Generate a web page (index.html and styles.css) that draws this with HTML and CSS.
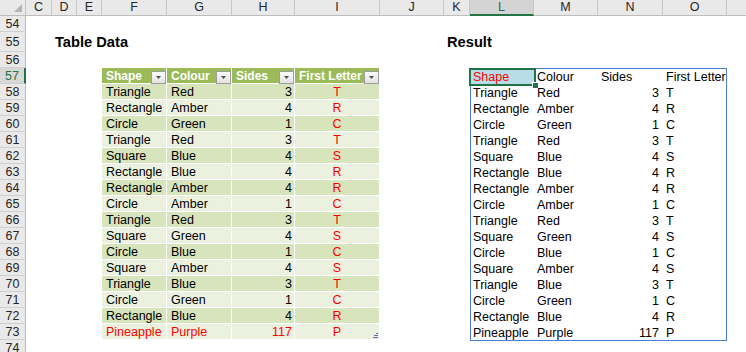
FILE: index.html
```html
<!DOCTYPE html>
<html>
<head>
<meta charset="utf-8">
<title>Sheet</title>
<link rel="stylesheet" href="styles.css">
</head>
<body>
<div class="sheet">
  <div class="corner"><span class="tri"></span></div>
  <div class="colhead">
    <div class="ch">C</div><div class="ch">D</div><div class="ch">E</div><div class="ch">F</div>
    <div class="ch">G</div><div class="ch">H</div><div class="ch">I</div><div class="ch">J</div>
    <div class="ch">K</div><div class="ch on">L</div><div class="ch">M</div><div class="ch">N</div>
    <div class="ch">O</div><div class="ch"></div>
  </div>
  <div class="rowhead">
    <div class="rh">54</div><div class="rh tall">55</div><div class="rh">56</div><div class="rh on">57</div>
    <div class="rh">58</div><div class="rh">59</div><div class="rh">60</div><div class="rh">61</div>
    <div class="rh">62</div><div class="rh">63</div><div class="rh">64</div><div class="rh">65</div>
    <div class="rh">66</div><div class="rh">67</div><div class="rh">68</div><div class="rh">69</div>
    <div class="rh">70</div><div class="rh">71</div><div class="rh">72</div><div class="rh">73</div>
    <div class="rh">74</div>
  </div>
  <div class="cells">
    <div class="title t1">Table Data</div>
    <div class="title t2">Result</div>

    <div class="tbl">
      <div class="tr th">
        <div class="hc"><span>Shape</span><i class="fb"><svg width="5" height="3" viewBox="0 0 5 3"><polygon points="0,0 5,0 2.5,3" fill="#505050"/></svg></i></div>
        <div class="hc"><span>Colour</span><i class="fb"><svg width="5" height="3" viewBox="0 0 5 3"><polygon points="0,0 5,0 2.5,3" fill="#505050"/></svg></i></div>
        <div class="hc"><span>Sides</span><i class="fb"><svg width="5" height="3" viewBox="0 0 5 3"><polygon points="0,0 5,0 2.5,3" fill="#505050"/></svg></i></div>
        <div class="hc"><span>First Letter</span><i class="fb"><svg width="5" height="3" viewBox="0 0 5 3"><polygon points="0,0 5,0 2.5,3" fill="#505050"/></svg></i></div>
      </div>
      <div class="tr b1"><div>Triangle</div><div>Red</div><div class="n">3</div><div class="l">T</div></div>
      <div class="tr b2"><div>Rectangle</div><div>Amber</div><div class="n">4</div><div class="l">R</div></div>
      <div class="tr b1"><div>Circle</div><div>Green</div><div class="n">1</div><div class="l">C</div></div>
      <div class="tr b2"><div>Triangle</div><div>Red</div><div class="n">3</div><div class="l">T</div></div>
      <div class="tr b1"><div>Square</div><div>Blue</div><div class="n">4</div><div class="l">S</div></div>
      <div class="tr b2"><div>Rectangle</div><div>Blue</div><div class="n">4</div><div class="l">R</div></div>
      <div class="tr b1"><div>Rectangle</div><div>Amber</div><div class="n">4</div><div class="l">R</div></div>
      <div class="tr b2"><div>Circle</div><div>Amber</div><div class="n">1</div><div class="l">C</div></div>
      <div class="tr b1"><div>Triangle</div><div>Red</div><div class="n">3</div><div class="l">T</div></div>
      <div class="tr b2"><div>Square</div><div>Green</div><div class="n">4</div><div class="l">S</div></div>
      <div class="tr b1"><div>Circle</div><div>Blue</div><div class="n">1</div><div class="l">C</div></div>
      <div class="tr b2"><div>Square</div><div>Amber</div><div class="n">4</div><div class="l">S</div></div>
      <div class="tr b1"><div>Triangle</div><div>Blue</div><div class="n">3</div><div class="l">T</div></div>
      <div class="tr b2"><div>Circle</div><div>Green</div><div class="n">1</div><div class="l">C</div></div>
      <div class="tr b1"><div>Rectangle</div><div>Blue</div><div class="n">4</div><div class="l">R</div></div>
      <div class="tr b2 red"><div>Pineapple</div><div>Purple</div><div class="n">117</div><div class="l last">P<svg class="grip" width="5" height="5" viewBox="0 0 5 5"><rect x="3" y="0" width="2" height="1" fill="#5d6fb6"/><rect x="1" y="2" width="4" height="1" fill="#5d6fb6"/><rect x="0" y="4" width="5" height="1" fill="#5d6fb6"/></svg></div></div>
    </div>

    <div class="res">
      <div class="rr"><div class="sel"><span class="red-t">Shape</span></div><div>Colour</div><div>Sides</div><div>First Letter</div></div>
      <div class="rr"><div>Triangle</div><div>Red</div><div class="n">3</div><div>T</div></div>
      <div class="rr"><div>Rectangle</div><div>Amber</div><div class="n">4</div><div>R</div></div>
      <div class="rr"><div>Circle</div><div>Green</div><div class="n">1</div><div>C</div></div>
      <div class="rr"><div>Triangle</div><div>Red</div><div class="n">3</div><div>T</div></div>
      <div class="rr"><div>Square</div><div>Blue</div><div class="n">4</div><div>S</div></div>
      <div class="rr"><div>Rectangle</div><div>Blue</div><div class="n">4</div><div>R</div></div>
      <div class="rr"><div>Rectangle</div><div>Amber</div><div class="n">4</div><div>R</div></div>
      <div class="rr"><div>Circle</div><div>Amber</div><div class="n">1</div><div>C</div></div>
      <div class="rr"><div>Triangle</div><div>Red</div><div class="n">3</div><div>T</div></div>
      <div class="rr"><div>Square</div><div>Green</div><div class="n">4</div><div>S</div></div>
      <div class="rr"><div>Circle</div><div>Blue</div><div class="n">1</div><div>C</div></div>
      <div class="rr"><div>Square</div><div>Amber</div><div class="n">4</div><div>S</div></div>
      <div class="rr"><div>Triangle</div><div>Blue</div><div class="n">3</div><div>T</div></div>
      <div class="rr"><div>Circle</div><div>Green</div><div class="n">1</div><div>C</div></div>
      <div class="rr"><div>Rectangle</div><div>Blue</div><div class="n">4</div><div>R</div></div>
      <div class="rr"><div>Pineapple</div><div>Purple</div><div class="n">117</div><div>P</div></div>
    </div>
  </div>
</div>
</body>
</html>
```

FILE: styles.css
```css
html, body {
  margin: 0;
  padding: 0;
  background: #fff;
}
body {
  font-family: "Liberation Sans", Arial, sans-serif;
  font-size: 12.5px;
  color: #000;
  width: 746px;
  height: 352px;
  overflow: hidden;
}
.sheet {
  display: grid;
  grid-template-columns: 26px 720px;
  grid-template-rows: 16px 336px;
  width: 746px;
  height: 352px;
  overflow: hidden;
}
.corner {
  background: #e9e9e9;
  border-right: 1px solid #c4c4c4;
  border-bottom: 1px solid #bdbdbd;
  box-sizing: border-box;
  display: flex;
  align-items: flex-end;
  justify-content: flex-end;
  padding: 0 3px 3px 0;
}
.tri {
  width: 0;
  height: 0;
  border-left: 8px solid transparent;
  border-bottom: 8px solid #b5b5b5;
}
.colhead {
  display: grid;
  grid-template-columns: 26px 25px 25px 65px 65px 63px 85px 64px 26px 64px 64px 65px 64px 64px;
  overflow: hidden;
}
.ch {
  box-sizing: border-box;
  height: 16px;
  background: #e9e9e9;
  border-right: 1px solid #c8c8c8;
  border-bottom: 1px solid #bdbdbd;
  text-align: center;
  line-height: 15px;
  color: #262626;
  font-size: 12.5px;
}
.ch.on {
  background: #d4d4d4;
  color: #217346;
  border-bottom: 2px solid #217346;
}
.rowhead {
  display: flex;
  flex-direction: column;
}
.rh {
  box-sizing: border-box;
  height: 16px;
  flex: none;
  background: #e9e9e9;
  border-right: 1px solid #bdbdbd;
  border-bottom: 1px solid #cfcfcf;
  text-align: center;
  line-height: 17px;
  color: #262626;
}
.rh.tall {
  height: 20px;
  line-height: 21px;
}
.rh.on {
  background: #d8d8d8;
  color: #217346;
  border-right: 2px solid #217346;
}
.cells {
  display: grid;
  grid-template-columns: 26px 25px 25px 65px 65px 63px 85px 64px 26px 64px 64px 65px 64px 64px;
  grid-template-rows: 16px 20px 16px repeat(17, 16px) 16px;
  overflow: hidden;
}
.title {
  font-weight: bold;
  font-size: 14.67px;
  line-height: 20px;
  padding-left: 3px;
  white-space: nowrap;
}
.t1 {
  grid-column: 2 / span 4;
  grid-row: 2;
}
.t2 {
  grid-column: 9 / span 2;
  grid-row: 2;
}
.tbl {
  grid-column: 4 / span 4;
  grid-row: 4 / span 17;
}
.tr {
  display: grid;
  grid-template-columns: 65px 65px 63px 85px;
  height: 16px;
}
.tr > div {
  box-sizing: border-box;
  border-right: 1px solid #fff;
  border-bottom: 1px solid #fff;
  padding: 0 3px 0 4px;
  line-height: 16px;
  height: 16px;
  white-space: nowrap;
  overflow: hidden;
}
.tr > div:first-child {
  padding-left: 4px;
}
.th {
  background: #9bbb59;
  color: #fff;
  font-weight: bold;
  font-size: 12px;
}
.th .hc {
  display: flex;
  align-items: flex-start;
  justify-content: space-between;
  padding: 0 0 0 4px;
  overflow: visible;
}
.th .hc span {
  line-height: 17px;
}
.fb {
  box-sizing: border-box;
  width: 15px;
  height: 13px;
  margin-top: 3px;
  border: 1px solid #9d9d9d;
  background: linear-gradient(#fbfbfb, #e2e2e2);
  display: flex;
  align-items: center;
  justify-content: center;
  flex: none;
}
.fb svg {
  display: block;
}
.b1 { background: #d8e4bc; }
.b2 { background: #ebf1de; }
.tr > .n {
  text-align: right;
  padding-right: 2px;
}
.tr > .l {
  text-align: center;
  color: #ff0000;
  padding: 0;
}
.red > div {
  color: #ff0000;
}
.last {
  position: relative;
}
.grip {
  position: absolute;
  right: 1px;
  bottom: 1px;
}
.res {
  grid-column: 10 / span 4;
  grid-row: 4 / span 17;
  border: 1px solid #4a7fd0;
  box-sizing: border-box;
  height: 273px;
  margin-top: 0;
}
.rr {
  display: grid;
  grid-template-columns: 63px 64px 65px 63px;
  height: 16px;
  line-height: 16px;
}
.rr > div {
  padding-left: 2px;
  white-space: nowrap;
}
.rr > div + div {
  padding-left: 3px;
}
.rr > .n {
  text-align: right;
  padding-right: 4px;
}
.sel {
  position: relative;
  background: #b7dee8;
  margin: -1px 0 0 -1px;
  padding-top: 1px;
  padding-left: 3px !important;
}
.sel::after {
  content: "";
  position: absolute;
  left: -1px;
  top: 0;
  right: -2px;
  bottom: -1px;
  border: 2px solid #217346;
}
.sel::before {
  content: "";
  position: absolute;
  right: -4px;
  bottom: -3px;
  width: 5px;
  height: 5px;
  background: #217346;
  border-left: 1px solid #fff;
  border-top: 1px solid #fff;
  z-index: 2;
}
.red-t {
  color: #ff0000;
}
```
